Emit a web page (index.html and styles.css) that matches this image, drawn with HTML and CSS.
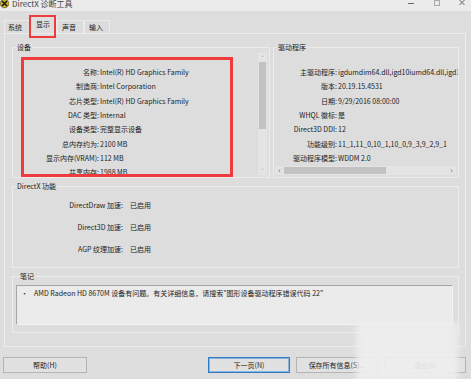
FILE: index.html
```html
<!DOCTYPE html>
<html lang="zh-CN">
<head>
<meta charset="utf-8">
<title>DirectX 诊断工具</title>
<link rel="stylesheet" href="styles.css">
</head>
<body>
<div class="titlebar">
  <svg class="appicon" width="9" height="10" viewBox="0 0 9 10">
    <circle cx="4.5" cy="4.5" r="4.3" fill="#c9b21c" stroke="#4a4210" stroke-width="0.6"/>
    <path d="M2 2 L7 7 M7 2 L2 7" stroke="#1b1b1b" stroke-width="1.6"/>
  </svg>
  <span class="title">DirectX 诊断工具</span>
  <svg class="controls" width="60" height="11" viewBox="0 0 60 11">
    <path d="M2 3.5 H8" stroke="#666" stroke-width="1"/>
    <rect x="28.5" y="0.5" width="5" height="5" fill="none" stroke="#aaa" stroke-width="1"/>
    <path d="M53.5 0 L58.5 5 M58.5 0 L53.5 5" stroke="#666" stroke-width="1"/>
  </svg>
</div>
<div class="tabs">
  <div class="tab t1">系统</div>
  <div class="tab active">显示</div>
  <div class="tab t3">声音</div>
  <div class="tab t4">输入</div>
</div>
<div class="panel">
  <div class="toprow">
    <fieldset class="group device">
      <legend>设备</legend>
      <div class="scrollarea">
        <div class="rows">
          <div class="row"><span class="label">名称:</span><span class="value">Intel(R) HD Graphics Family</span></div>
          <div class="row"><span class="label">制造商:</span><span class="value">Intel Corporation</span></div>
          <div class="row"><span class="label">芯片类型:</span><span class="value">Intel(R) HD Graphics Family</span></div>
          <div class="row"><span class="label">DAC 类型:</span><span class="value">Internal</span></div>
          <div class="row"><span class="label">设备类型:</span><span class="value">完整显示设备</span></div>
          <div class="row"><span class="label">总内存约为:</span><span class="value">2100 MB</span></div>
          <div class="row"><span class="label">显示内存(VRAM):</span><span class="value">112 MB</span></div>
          <div class="row"><span class="label">共享内存:</span><span class="value">1988 MB</span></div>
        </div>
        <div class="vscroll">
          <div class="arrow">&#708;</div>
          <div class="vthumb"></div>
          <div class="vtrack"></div>
          <div class="arrow">&#709;</div>
        </div>
      </div>
    </fieldset>
    <fieldset class="group driver">
      <legend>驱动程序</legend>
      <div class="rows drows">
        <div class="row"><span class="label">主驱动程序:</span><span class="value">igdumdim64.dll,igd10iumd64.dll,igd10iumd64.dll</span></div>
        <div class="row"><span class="label">版本:</span><span class="value">20.19.15.4531</span></div>
        <div class="row"><span class="label">日期:</span><span class="value">9/29/2016 08:00:00</span></div>
        <div class="row"><span class="label">WHQL 徽标:</span><span class="value">是</span></div>
        <div class="row"><span class="label">Direct3D DDI:</span><span class="value">12</span></div>
        <div class="row"><span class="label">功能级别:</span><span class="value">11_1,11_0,10_1,10_0,9_3,9_2,9_1</span></div>
        <div class="row"><span class="label">驱动程序模型:</span><span class="value">WDDM 2.0</span></div>
      </div>
      <div class="hscroll">
        <div class="harrow">&#8249;</div>
        <div class="hthumb"></div>
        <div class="htrack"></div>
        <div class="harrow">&#8250;</div>
      </div>
    </fieldset>
  </div>
  <fieldset class="group features">
    <legend>DirectX 功能</legend>
    <div class="frow"><span class="flabel">DirectDraw 加速:</span><span class="fvalue">已启用</span></div>
    <div class="frow"><span class="flabel">Direct3D 加速:</span><span class="fvalue">已启用</span></div>
    <div class="frow"><span class="flabel">AGP 纹理加速:</span><span class="fvalue">已启用</span></div>
  </fieldset>
  <fieldset class="group notes">
    <legend>笔记</legend>
    <div class="notebox"><span class="bullet">•</span><span>AMD Radeon HD 8670M 设备有问题。有关详细信息，请搜索"图形设备驱动程序错误代码 22"</span></div>
  </fieldset>
</div>
<div class="buttons">
  <div class="btn help">帮助(H)</div>
  <div class="spacer"></div>
  <div class="btn focus">下一页(N)</div>
  <div class="btn">保存所有信息(S)...</div>
  <div class="btn">退出(X)</div>
</div>
<div class="mark mark-tab"></div>
<div class="mark mark-device"></div>
<div class="watermark"></div>
</body>
</html>
```
FILE: styles.css
```css
* { box-sizing: border-box; }
body {
  margin: 0;
  width: 471px;
  height: 379px;
  overflow: hidden;
  position: relative;
  background: #dddddd;
  font-family: "Noto Sans CJK SC", "Noto Sans", sans-serif;
  font-size: 7px;
  color: #222;
}
.titlebar {
  height: 11px;
  background: #ebebeb;
  display: flex;
  align-items: flex-start;
}
.appicon { margin-top: -1px; }
.title {
  margin-left: 3px;
  font-size: 8px;
  line-height: 8px;
  color: #444;
}
.controls { margin-left: auto; margin-right: 5px; }

.tabs {
  height: 22px;
  display: flex;
  align-items: flex-end;
  padding-left: 4px;
}
.tab {
  height: 13px;
  width: 26px;
  border: 1px solid #eaeaea;
  border-bottom: none;
  line-height: 12px;
  padding-left: 3px;
  background: #dcdcdc;
}
.tab.active {
  height: 17px;
  width: 27px;
  padding-left: 5px;
  line-height: 14px;
  background: #dedede;
}
.tab.t3 { width: 27px; padding-left: 4px; }
.tab.t4 { padding-left: 4px; }

.panel {
  margin-left: 4px;
  width: 462px;
  height: 314px;
  border: 1px solid #ececec;
  padding: 9px 6px 12px 7px;
}
.group {
  margin: 0;
  padding: 0;
  min-width: 0;
  border: 1px solid #ececec;
}
.group legend {
  padding: 0 1px;
  margin-left: 3px;
  line-height: 9px;
  font-size: 7px;
}
.toprow {
  display: flex;
  gap: 3px;
  height: 135px;
}
.device {
  width: 258px;
  padding: 1px 2px 2px 0;
}
.driver {
  width: 186px;
  padding: 1px 0 1px 0;
}
.scrollarea {
  display: flex;
  height: 122px;
}
.rows {
  flex: 1;
  padding-top: 12px;
  overflow: hidden;
}
.drows { height: 112px; }
.row {
  display: flex;
  align-items: center;
  height: 14.3px;
  white-space: nowrap;
}
.label {
  width: 86px;
  text-align: right;
  flex: none;
}
.driver .label { width: 63px; }
.value { padding-left: 1px; }

.vscroll {
  width: 9px;
  background: #e4e4e4;
  display: flex;
  flex-direction: column;
}
.arrow {
  height: 9px;
  font-size: 6px;
  line-height: 9px;
  text-align: center;
  color: #666;
}
.vthumb {
  height: 67px;
  margin: 0 1px;
  background: #c2c2c2;
}
.vtrack { flex: 1; }

.hscroll {
  margin: 1px 2px 0 1px;
  height: 9px;
  background: #e4e4e4;
  display: flex;
}
.harrow {
  width: 9px;
  font-size: 8px;
  line-height: 8px;
  text-align: center;
  color: #666;
}
.hthumb {
  width: 102px;
  margin: 1px 0;
  background: #c2c2c2;
}
.htrack { flex: 1; }

.features {
  margin-top: 4px;
  padding: 3px 0 7px 0;
}
.frow {
  display: flex;
  align-items: center;
  height: 22px;
}
.flabel {
  width: 110px;
  text-align: right;
}
.fvalue { padding-left: 7px; }

.notes {
  margin-top: 4px;
  padding: 4px 5px 7px 3px;
}
.notebox {
  height: 40px;
  background: #ebebeb;
  border: 1px solid #f4f4f4;
  border-top-color: #a5a5a5;
  border-left-color: #a5a5a5;
  padding: 3px 0 0 4px;
  line-height: 9px;
  display: flex;
  white-space: nowrap;
}
.bullet { width: 13px; }

.buttons {
  margin-top: 10px;
  display: flex;
  gap: 6px;
  padding: 0 5px 0 3px;
}
.spacer { flex: 1; margin-left: -12px; }
.btn {
  width: 82px;
  height: 16px;
  border: 1px solid #b4b4b4;
  background: #e1e1e1;
  text-align: center;
  line-height: 14px;
}
.btn.help { width: 84px; }
.btn.focus {
  border-color: #2f7bc4;
  box-shadow: inset 0 0 0 1px #8ab4df;
}

.mark {
  position: absolute;
  border: 2px solid #ef3b3b;
}
.mark-tab { left: 29px; top: 15px; width: 27px; height: 23px; }
.mark-device { left: 21px; top: 57px; width: 212px; height: 120px; border-width: 3px; }
.watermark {
  position: absolute;
  left: 356px;
  top: 322px;
  width: 102px;
  height: 60px;
  background: rgba(238, 238, 238, 0.92);
  filter: blur(3px);
}
```
